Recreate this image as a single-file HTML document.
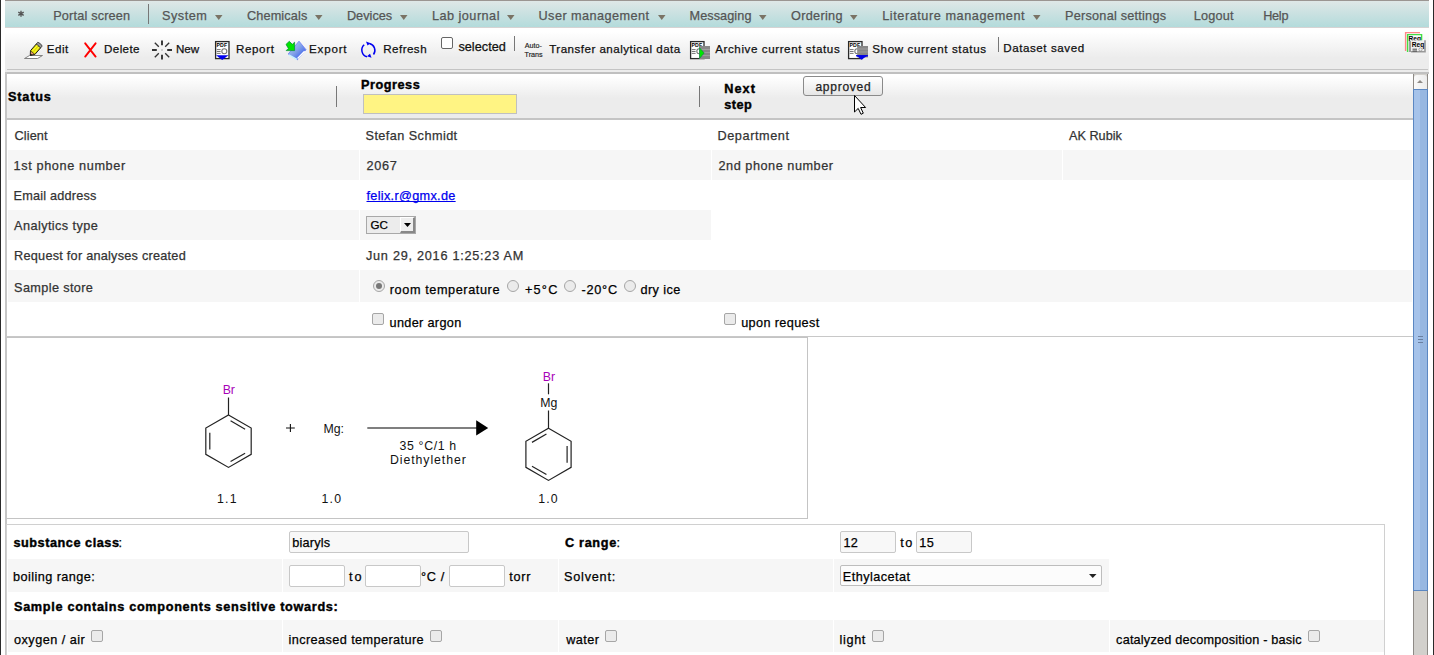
<!DOCTYPE html><html><head><meta charset="utf-8"><style>
html,body{margin:0;padding:0}
body{width:1434px;height:655px;position:relative;overflow:hidden;background:#fff;font-family:"Liberation Sans",sans-serif}
.t{position:absolute;white-space:pre;line-height:20px;-webkit-text-stroke:0.25px currentColor}
.cb{position:absolute;width:10px;height:10px;border:1px solid #a6a6a6;border-radius:2px;background:#ebebeb;box-sizing:content-box}
.rd{position:absolute;width:10px;height:10px;border:1px solid #a6a6a6;border-radius:50%;background:#ebebeb}
.inp{position:absolute;border:1px solid #c8c8c8;border-radius:2px;background:#f8f8f8;box-sizing:border-box}
svg{position:absolute;overflow:visible}
</style></head><body>
<div style="position:absolute;left:0px;top:0px;width:1px;height:655px;background:#2a2a2a"></div>
<div style="position:absolute;left:1433px;top:0px;width:1px;height:655px;background:#2a2a2a"></div>
<div style="position:absolute;left:1px;top:0px;width:1432px;height:655px;background:#fff"></div>
<div style="position:absolute;left:5px;top:0px;width:1424px;height:1px;background:#9b9592"></div>
<div style="position:absolute;left:5px;top:1px;width:1424px;height:26px;background:linear-gradient(#dfe7e7,#b3dbdb)"></div>
<div style="position:absolute;left:5px;top:27px;width:1424px;height:1px;background:#d6d3d3"></div>
<div style="position:absolute;left:148px;top:4px;width:1px;height:20px;background:#777"></div>
<svg style="left:214.9px;top:14.5px" width="8" height="5"><path d="M0 0H7.5L3.75 5Z" fill="#7a7365"/></svg>
<svg style="left:315.0px;top:14.5px" width="8" height="5"><path d="M0 0H7.5L3.75 5Z" fill="#7a7365"/></svg>
<svg style="left:400.0px;top:14.5px" width="8" height="5"><path d="M0 0H7.5L3.75 5Z" fill="#7a7365"/></svg>
<svg style="left:507.0px;top:14.5px" width="8" height="5"><path d="M0 0H7.5L3.75 5Z" fill="#7a7365"/></svg>
<svg style="left:658.0px;top:14.5px" width="8" height="5"><path d="M0 0H7.5L3.75 5Z" fill="#7a7365"/></svg>
<svg style="left:759.0px;top:14.5px" width="8" height="5"><path d="M0 0H7.5L3.75 5Z" fill="#7a7365"/></svg>
<svg style="left:850.0px;top:14.5px" width="8" height="5"><path d="M0 0H7.5L3.75 5Z" fill="#7a7365"/></svg>
<svg style="left:1033.0px;top:14.5px" width="8" height="5"><path d="M0 0H7.5L3.75 5Z" fill="#7a7365"/></svg>
<div style="position:absolute;left:5px;top:28px;width:1424px;height:44px;background:linear-gradient(#fff 8%,#ececec 68%)"></div>
<div style="position:absolute;left:7px;top:69px;width:1421px;height:1px;background:#c4c4c4"></div>
<div style="position:absolute;left:5px;top:72px;width:1424px;height:2px;background:#c0c0c0"></div>
<div style="position:absolute;left:5px;top:72px;width:2px;height:583px;background:#c6c6c6"></div>
<div style="position:absolute;left:7px;top:74px;width:1406px;height:44px;background:linear-gradient(#fff 5%,#ececec 55%)"></div>
<div style="position:absolute;left:6px;top:118px;width:1407px;height:2px;background:#c4c4c4"></div>
<div style="position:absolute;left:336px;top:86px;width:1px;height:21px;background:#777"></div>
<div style="position:absolute;left:699px;top:86px;width:1px;height:21px;background:#777"></div>
<div style="position:absolute;left:363px;top:94px;width:154px;height:20px;background:#fff483;border:1px solid #c0c0c0;box-sizing:border-box"></div>
<div style="position:absolute;left:803px;top:76px;width:80px;height:20px;border:1px solid #8a8a8a;border-radius:3px;background:linear-gradient(#fff,#e6e6e6);box-sizing:border-box"></div>
<div style="position:absolute;left:8px;top:150px;width:351px;height:30px;background:#f6f6f6"></div>
<div style="position:absolute;left:360px;top:150px;width:351px;height:30px;background:#f6f6f6"></div>
<div style="position:absolute;left:712px;top:150px;width:350px;height:30px;background:#f6f6f6"></div>
<div style="position:absolute;left:1063px;top:150px;width:349px;height:30px;background:#f6f6f6"></div>
<div style="position:absolute;left:8px;top:210px;width:351px;height:30px;background:#f6f6f6"></div>
<div style="position:absolute;left:360px;top:210px;width:351px;height:30px;background:#f6f6f6"></div>
<div style="position:absolute;left:8px;top:270px;width:351px;height:32px;background:#f6f6f6"></div>
<div style="position:absolute;left:360px;top:270px;width:1052px;height:32px;background:#f6f6f6"></div>
<div style="position:absolute;left:6px;top:336px;width:1407px;height:1px;background:#c8c8c8"></div>
<div style="position:absolute;left:366px;top:216px;width:50px;height:18px;border:1px solid #a8a8a8;background:#ececec;box-sizing:border-box"></div>
<div style="position:absolute;left:400px;top:217px;width:15px;height:16px;background:#eee;border-top:1px solid #fff;border-left:1px solid #fff;border-right:2px solid #888;border-bottom:2px solid #888;box-sizing:border-box"></div>
<svg style="left:404px;top:222.5px" width="7" height="4"><path d="M0 0H7L3.5 4Z" fill="#000"/></svg>
<div class="rd" style="left:373px;top:280px"></div>
<div class="rd" style="left:507px;top:280px"></div>
<div class="rd" style="left:564px;top:280px"></div>
<div class="rd" style="left:624px;top:280px"></div>
<div style="position:absolute;left:376px;top:283px;width:6px;height:6px;border-radius:50%;background:#777"></div>
<div class="cb" style="left:372px;top:313px"></div>
<div class="cb" style="left:724px;top:313px"></div>
<div class="cb" style="left:441px;top:37px;background:#fff;border-color:#666"></div>
<div style="position:absolute;left:6px;top:337px;width:802px;height:182px;border:1px solid #c4c4c4;border-left:none;box-sizing:border-box"></div>
<div style="position:absolute;left:6px;top:524px;width:1379px;height:131px;border:1px solid #d0d0d0;border-bottom:none;box-sizing:border-box"></div>
<div style="position:absolute;left:8px;top:559px;width:274px;height:33px;background:#f6f6f6"></div>
<div style="position:absolute;left:283px;top:559px;width:275px;height:33px;background:#f6f6f6"></div>
<div style="position:absolute;left:559px;top:559px;width:274px;height:33px;background:#f6f6f6"></div>
<div style="position:absolute;left:834px;top:559px;width:275px;height:33px;background:#f6f6f6"></div>
<div style="position:absolute;left:8px;top:620px;width:274px;height:32px;background:#f6f6f6"></div>
<div style="position:absolute;left:283px;top:620px;width:275px;height:32px;background:#f6f6f6"></div>
<div style="position:absolute;left:559px;top:620px;width:274px;height:32px;background:#f6f6f6"></div>
<div style="position:absolute;left:834px;top:620px;width:275px;height:32px;background:#f6f6f6"></div>
<div style="position:absolute;left:1110px;top:620px;width:274px;height:32px;background:#f6f6f6"></div>
<div class="inp" style="left:289px;top:531px;width:180px;height:22px"></div>
<div class="inp" style="left:840px;top:531px;width:56px;height:22px"></div>
<div class="inp" style="left:916px;top:531px;width:56px;height:22px"></div>
<div class="inp" style="left:289px;top:565px;width:56px;height:22px;background:#fff"></div>
<div class="inp" style="left:365px;top:565px;width:56px;height:22px;background:#fff"></div>
<div class="inp" style="left:449px;top:565px;width:56px;height:22px;background:#fff"></div>
<div class="inp" style="left:840px;top:565px;width:262px;height:21px;background:#fcfcfc;border-color:#bdbdbd"></div>
<svg style="left:1089px;top:574px" width="8" height="4"><path d="M0 0H7.5L3.75 4Z" fill="#222"/></svg>
<div class="cb" style="left:91px;top:630px"></div>
<div class="cb" style="left:430px;top:630px"></div>
<div class="cb" style="left:605px;top:630px"></div>
<div class="cb" style="left:872px;top:630px"></div>
<div class="cb" style="left:1308px;top:630px"></div>
<div style="position:absolute;left:1413px;top:74px;width:15px;height:581px;background:#d2d0cc;border-left:1px solid #8e8a86;border-right:1px solid #8e8a86;box-sizing:border-box"></div>
<div style="position:absolute;left:1414px;top:75px;width:13px;height:14px;background:linear-gradient(90deg,#fafafa,#ececec);border-radius:3px 3px 0 0"></div>
<svg style="left:1417px;top:80px" width="6" height="3"><path d="M0 3L3 0L6 3Z" fill="#8e8a86"/></svg>
<div style="position:absolute;left:1413px;top:89px;width:15px;height:502px;background:linear-gradient(90deg,#a6c3ea 0,#a6c3ea 50%,#97b7e1 50%);border:1px solid #5b87c2;box-sizing:border-box"></div>
<div style="position:absolute;left:1418px;top:336px;width:5px;height:1px;background:#6a7fa0"></div>
<div style="position:absolute;left:1418px;top:339px;width:5px;height:1px;background:#6a7fa0"></div>
<div style="position:absolute;left:1418px;top:342px;width:5px;height:1px;background:#6a7fa0"></div>
<svg style="left:0;top:0;position:absolute;pointer-events:none" width="1434" height="655" viewBox="0 0 1434 655"><path d="M21 10.8V16.8M18.3 12.2L23.7 15.4M23.7 12.2L18.3 15.4" stroke="#555" stroke-width="1.35"/><path d="M24.5 58.5L29.5 55.5H42.5L37.5 58.5Z" fill="#fff" stroke="#777" stroke-width="0.9"/><g transform="translate(30.3 55.3) rotate(-49)"><path d="M0 0L3.6 -2.9H12.5V2.9H3.6Z" fill="#e4e000" stroke="#111" stroke-width="0.9"/><path d="M0.3 0L3.6 -2.6V2.6Z" fill="#f0a070" stroke="#222" stroke-width="0.6"/><path d="M0 0L1.5 -1.1V1.1Z" fill="#111"/><path d="M12.5 -2.9H14.8Q16 0 14.8 2.9H12.5Z" fill="#999" stroke="#333" stroke-width="0.8"/><path d="M4.5 -1.2H12.2M4.5 1.2H12.2" stroke="#ffff50" stroke-width="0.8"/></g><path d="M85.2 43.3L95.6 56.6M95.6 43.3L85.2 56.6" stroke="#f00" stroke-width="1.9" stroke-linecap="round"/><g stroke="#333" stroke-width="1.9" stroke-linecap="butt"><path d="M162 40.5V45.3M162 54.7V59.5M152 50H156.8M167.2 50H172"/><path d="M154.8 42.8L158.8 46.8M169.2 42.8L165.2 46.8M154.8 57.2L158.8 53.2M169.2 57.2L165.2 53.2" stroke-width="1.35"/></g><rect x="161.3" y="49.3" width="1.4" height="1.4" fill="#aaa"/><rect x="215.6" y="41.6" width="13.4" height="17" fill="#fff" stroke="#2a2a2a" stroke-width="1.3"/><text x="216.4" y="47.0" font-family="Liberation Sans" font-weight="bold" font-size="5.2" letter-spacing="0.2" fill="#000">PDF</text><path d="M216.8 49.6H220.6M216.8 51.5H220.6M216.8 53.4H220.6" stroke="#666" stroke-width="0.9"/><circle cx="224.3" cy="51.2" r="2.5" fill="none" stroke="#777" stroke-width="1.1"/><path d="M216 55.3H228.5L222.2 60Z" fill="#0000f0"/><defs><linearGradient id="gb" x1="0" y1="0" x2="1" y2="1"><stop offset="0" stop-color="#c8dcf4"/><stop offset="0.5" stop-color="#7f9fe8"/><stop offset="1" stop-color="#1a40f0"/></linearGradient></defs><path d="M299 41.2L306 49.7L297.4 59.8L288.2 54Z" fill="url(#gb)" stroke="#6a7af8" stroke-width="0.8"/><path d="M304.6 51.2L297.6 58.6" stroke="#fff" stroke-width="1.4"/><path d="M288.8 54.8L297 59.3" stroke="#c8f4ff" stroke-width="1.4"/><path d="M286 44.4L289.3 41.3L292.3 44.3L294.6 42.2V50.6H286.2L288.4 48.4Z" fill="#00e400" stroke="#083" stroke-width="0.7" stroke-linejoin="miter"/><g fill="none" stroke="#0000f0" stroke-width="1.5"><path d="M364.2 44.8A7 7 0 0 0 367 56.8"/><path d="M373.5 54.5A7 7 0 0 0 369.5 43.5"/></g><path d="M366 41.5L370.5 43.2L367.5 45.6Z" fill="#0000f0"/><path d="M371.5 57.8L367 56.2L370 53.8Z" fill="#0000f0"/><rect x="690.6" y="41.6" width="13.4" height="17" fill="#fff" stroke="#2a2a2a" stroke-width="1.3"/><text x="691.4" y="47.0" font-family="Liberation Sans" font-weight="bold" font-size="5.2" letter-spacing="0.2" fill="#000">PDF</text><path d="M691.8 49.6H695.6M691.8 51.5H695.6M691.8 53.4H695.6" stroke="#666" stroke-width="0.9"/><circle cx="699.3" cy="51.2" r="2.5" fill="none" stroke="#777" stroke-width="1.1"/><rect x="699.2" y="46" width="10.8" height="13" fill="#878787"/><path d="M699.2 49.5H710M699.2 52.5H710M699.2 55.5H710" stroke="#a8a8a8" stroke-width="0.7"/><path d="M699.5 47.6L704.2 53L699.5 58.6Z" fill="#00e600" stroke="#074" stroke-width="0.5"/><rect x="848.6" y="41.6" width="13.4" height="17" fill="#fff" stroke="#2a2a2a" stroke-width="1.3"/><text x="849.4" y="47.0" font-family="Liberation Sans" font-weight="bold" font-size="5.2" letter-spacing="0.2" fill="#000">PDF</text><path d="M849.8 49.6H853.6M849.8 51.5H853.6M849.8 53.4H853.6" stroke="#666" stroke-width="0.9"/><circle cx="857.3" cy="51.2" r="2.5" fill="none" stroke="#777" stroke-width="1.1"/><rect x="857.2" y="46" width="10.8" height="11.4" fill="#878787"/><path d="M857.2 49H868M857.2 52H868" stroke="#a8a8a8" stroke-width="0.7"/><path d="M856 55.2H868L861.5 59.8Z" fill="#0000e8"/><rect x="856" y="55.2" width="12" height="1.2" fill="#0000e8"/><path d="M1405.6 51V32.6H1420" fill="none" stroke="#ff8888" stroke-width="1.4"/><path d="M1407.6 52V34.6H1421.6V41" fill="none" stroke="#44dd44" stroke-width="1.4"/><text x="1408.6" y="40.6" font-family="Liberation Sans" font-weight="bold" font-size="6.6" fill="#000">Req</text><rect x="1411" y="40.3" width="14" height="11.5" fill="#f0f0f0"/><path d="M1425 40.3V51.8H1411" fill="none" stroke="#999" stroke-width="1.6"/><text x="1411.8" y="46.6" font-family="Liberation Sans" font-weight="bold" font-size="6.6" fill="#000">Req</text><path d="M1412.5 49.2H1417M1412.5 51H1417" stroke="#222" stroke-width="0.8"/><path d="M1410 41V52" stroke="#444" stroke-width="1"/><circle cx="1420.5" cy="49.5" r="1.6" fill="none" stroke="#888" stroke-width="0.7"/><rect x="514" y="36" width="1" height="15" fill="#777"/><rect x="998" y="37" width="1" height="15" fill="#777"/><text x="524.8" y="48.1" font-family="Liberation Sans" font-size="7.2" fill="#1a1a1a" stroke="#1a1a1a" stroke-width="0.15">Auto-</text><text x="524.6" y="56.9" font-family="Liberation Sans" font-size="7.2" fill="#1a1a1a" stroke="#1a1a1a" stroke-width="0.15">Trans</text><path d="M854.5 95.5V112L858.2 108.4L861 114.3L863.3 113.2L860.6 107.5H865.6Z" fill="#fff" stroke="#000" stroke-width="1" stroke-linejoin="round"/><polygon points="228.50,415.00 251.19,428.10 251.19,454.30 228.50,467.40 205.81,454.30 205.81,428.10" fill="none" stroke="#222" stroke-width="1.2" stroke-linejoin="miter"/><line x1="230.58" y1="420.82" x2="245.11" y2="429.21" stroke="#222" stroke-width="1.2"/><line x1="245.11" y1="453.19" x2="230.58" y2="461.58" stroke="#222" stroke-width="1.2"/><line x1="209.81" y1="449.58" x2="209.81" y2="432.82" stroke="#222" stroke-width="1.2"/><line x1="228.5" y1="397.5" x2="228.5" y2="415" stroke="#222" stroke-width="1.2"/><text x="228.8" y="394" text-anchor="middle" font-family="Liberation Sans" font-size="12.3" fill="#a800b8">Br</text><path d="M286 428H294.8M290.4 424V432" stroke="#111" stroke-width="1.1"/><text x="323.5" y="433" font-family="Liberation Sans" font-size="12.3" fill="#111">Mg:</text><line x1="367.3" y1="428" x2="477" y2="428" stroke="#555" stroke-width="1.4"/><path d="M476.2 420.3L488.2 428L476.2 435.6Z" fill="#000"/><text x="428.2" y="450" text-anchor="middle" font-family="Liberation Sans" font-size="12.3" letter-spacing="0.66" fill="#111">35 °C/1 h</text><text x="428.4" y="464" text-anchor="middle" font-family="Liberation Sans" font-size="12.3" letter-spacing="0.93" fill="#111">Diethylether</text><polygon points="548.50,428.20 571.10,441.25 571.10,467.35 548.50,480.40 525.90,467.35 525.90,441.25" fill="none" stroke="#222" stroke-width="1.2" stroke-linejoin="miter"/><line x1="531.97" y1="442.37" x2="546.43" y2="434.01" stroke="#222" stroke-width="1.2"/><line x1="567.10" y1="445.95" x2="567.10" y2="462.65" stroke="#222" stroke-width="1.2"/><line x1="546.43" y1="474.59" x2="531.97" y2="466.23" stroke="#222" stroke-width="1.2"/><line x1="548.5" y1="410.5" x2="548.5" y2="428.2" stroke="#222" stroke-width="1.2"/><line x1="548.5" y1="383.3" x2="548.5" y2="394.3" stroke="#222" stroke-width="1.2"/><text x="548.9" y="407.2" text-anchor="middle" font-family="Liberation Sans" font-size="12.3" fill="#111">Mg</text><text x="548.9" y="380.7" text-anchor="middle" font-family="Liberation Sans" font-size="12.3" fill="#a800b8">Br</text><text x="227.4" y="503.2" text-anchor="middle" font-family="Liberation Sans" font-size="12.3" letter-spacing="1.2" fill="#111">1.1</text><text x="331.9" y="503.2" text-anchor="middle" font-family="Liberation Sans" font-size="12.3" letter-spacing="1.2" fill="#111">1.0</text><text x="548.5" y="503.2" text-anchor="middle" font-family="Liberation Sans" font-size="12.3" letter-spacing="1.2" fill="#111">1.0</text></svg>
<span class="t" style="left:53.20px;top:6px;font-size:12.7px;font-weight:normal;letter-spacing:0.183px;color:#555;">Portal screen</span>
<span class="t" style="left:162.10px;top:6px;font-size:12.7px;font-weight:normal;letter-spacing:0.480px;color:#555;">System</span>
<span class="t" style="left:247.00px;top:6px;font-size:12.7px;font-weight:normal;letter-spacing:0.125px;color:#555;">Chemicals</span>
<span class="t" style="left:346.90px;top:6px;font-size:12.7px;font-weight:normal;letter-spacing:0.033px;color:#555;">Devices</span>
<span class="t" style="left:431.90px;top:6px;font-size:12.7px;font-weight:normal;letter-spacing:0.480px;color:#555;">Lab journal</span>
<span class="t" style="left:538.50px;top:6px;font-size:12.7px;font-weight:normal;letter-spacing:0.443px;color:#555;">User management</span>
<span class="t" style="left:689.50px;top:6px;font-size:12.7px;font-weight:normal;letter-spacing:0.075px;color:#555;">Messaging</span>
<span class="t" style="left:791.10px;top:6px;font-size:12.7px;font-weight:normal;letter-spacing:0.286px;color:#555;">Ordering</span>
<span class="t" style="left:882.20px;top:6px;font-size:12.7px;font-weight:normal;letter-spacing:0.560px;color:#555;">Literature management</span>
<span class="t" style="left:1065.10px;top:6px;font-size:12.7px;font-weight:normal;letter-spacing:0.225px;color:#555;">Personal settings</span>
<span class="t" style="left:1193.80px;top:6px;font-size:12.7px;font-weight:normal;letter-spacing:0.200px;color:#555;">Logout</span>
<span class="t" style="left:1263.20px;top:6px;font-size:12.7px;font-weight:normal;letter-spacing:-0.267px;color:#555;">Help</span>
<span class="t" style="left:46.80px;top:39px;font-size:11.6px;font-weight:normal;letter-spacing:0.467px;color:#111;">Edit</span>
<span class="t" style="left:104.10px;top:39px;font-size:11.6px;font-weight:normal;letter-spacing:0.360px;color:#111;">Delete</span>
<span class="t" style="left:176.10px;top:39px;font-size:11.6px;font-weight:normal;letter-spacing:-0.100px;color:#111;">New</span>
<span class="t" style="left:235.90px;top:39px;font-size:11.6px;font-weight:normal;letter-spacing:0.640px;color:#111;">Report</span>
<span class="t" style="left:309.00px;top:39px;font-size:11.6px;font-weight:normal;letter-spacing:0.800px;color:#111;">Export</span>
<span class="t" style="left:383.20px;top:39px;font-size:11.6px;font-weight:normal;letter-spacing:0.467px;color:#111;">Refresh</span>
<span class="t" style="left:458.40px;top:37px;font-size:12.7px;font-weight:normal;letter-spacing:0.029px;color:#111;">selected</span>
<span class="t" style="left:549.20px;top:39px;font-size:11.6px;font-weight:normal;letter-spacing:0.478px;color:#111;">Transfer analytical data</span>
<span class="t" style="left:715.20px;top:39px;font-size:11.6px;font-weight:normal;letter-spacing:0.590px;color:#111;">Archive current status</span>
<span class="t" style="left:872.20px;top:39px;font-size:11.6px;font-weight:normal;letter-spacing:0.633px;color:#111;">Show current status</span>
<span class="t" style="left:1003.20px;top:38px;font-size:11.6px;font-weight:normal;letter-spacing:0.567px;color:#111;">Dataset saved</span>
<span class="t" style="left:8.00px;top:87px;font-size:12.7px;font-weight:bold;letter-spacing:0.800px;color:#000;-webkit-text-stroke:0.4px currentColor;">Status</span>
<span class="t" style="left:360.90px;top:75px;font-size:12.7px;font-weight:bold;letter-spacing:0.543px;color:#000;-webkit-text-stroke:0.4px currentColor;">Progress</span>
<span class="t" style="left:724.20px;top:79px;font-size:12.7px;font-weight:bold;letter-spacing:1.067px;color:#000;-webkit-text-stroke:0.4px currentColor;">Next</span>
<span class="t" style="left:724.20px;top:95px;font-size:12.7px;font-weight:bold;letter-spacing:0.467px;color:#000;-webkit-text-stroke:0.4px currentColor;">step</span>
<span class="t" style="left:815.40px;top:77px;font-size:12px;font-weight:normal;letter-spacing:0.743px;color:#222;">approved</span>
<span class="t" style="left:14.50px;top:126px;font-size:12.7px;font-weight:normal;letter-spacing:0.120px;color:#333;">Client</span>
<span class="t" style="left:13.50px;top:156px;font-size:12.7px;font-weight:normal;letter-spacing:0.627px;color:#333;">1st phone number</span>
<span class="t" style="left:13.50px;top:186px;font-size:12.7px;font-weight:normal;letter-spacing:0.200px;color:#333;">Email address</span>
<span class="t" style="left:14.10px;top:216px;font-size:12.7px;font-weight:normal;letter-spacing:0.415px;color:#333;">Analytics type</span>
<span class="t" style="left:14.10px;top:246px;font-size:12.7px;font-weight:normal;letter-spacing:0.244px;color:#333;">Request for analyses created</span>
<span class="t" style="left:14.10px;top:278px;font-size:12.7px;font-weight:normal;letter-spacing:0.364px;color:#333;">Sample store</span>
<span class="t" style="left:365.50px;top:126px;font-size:12.7px;font-weight:normal;letter-spacing:0.431px;color:#333;">Stefan Schmidt</span>
<span class="t" style="left:366.50px;top:156px;font-size:12.7px;font-weight:normal;letter-spacing:0.667px;color:#333;">2067</span>
<span class="t" style="left:366.50px;top:186px;font-size:12.7px;font-weight:normal;letter-spacing:0.308px;color:#0000ee;text-decoration:underline;text-decoration-skip-ink:none;">felix.r@gmx.de</span>
<span class="t" style="left:370.40px;top:215px;font-size:11.6px;font-weight:normal;letter-spacing:0.200px;color:#000;">GC</span>
<span class="t" style="left:366.00px;top:246px;font-size:12.7px;font-weight:normal;letter-spacing:0.736px;color:#333;">Jun 29, 2016 1:25:23 AM</span>
<span class="t" style="left:389.80px;top:280px;font-size:12.7px;font-weight:normal;letter-spacing:0.587px;color:#000;">room temperature</span>
<span class="t" style="left:525.00px;top:280px;font-size:12.7px;font-weight:normal;letter-spacing:1.200px;color:#000;">+5°C</span>
<span class="t" style="left:581.50px;top:280px;font-size:12.7px;font-weight:normal;letter-spacing:0.750px;color:#000;">-20°C</span>
<span class="t" style="left:640.40px;top:280px;font-size:12.7px;font-weight:normal;letter-spacing:0.433px;color:#000;">dry ice</span>
<span class="t" style="left:389.60px;top:313px;font-size:12.7px;font-weight:normal;letter-spacing:0.320px;color:#000;">under argon</span>
<span class="t" style="left:741.20px;top:313px;font-size:12.7px;font-weight:normal;letter-spacing:0.364px;color:#000;">upon request</span>
<span class="t" style="left:717.50px;top:126px;font-size:12.7px;font-weight:normal;letter-spacing:0.578px;color:#333;">Department</span>
<span class="t" style="left:718.50px;top:156px;font-size:12.7px;font-weight:normal;letter-spacing:0.533px;color:#333;">2nd phone number</span>
<span class="t" style="left:1069.00px;top:126px;font-size:12.7px;font-weight:normal;letter-spacing:0.000px;color:#333;">AK Rubik</span>
<span class="t" style="left:13.40px;top:533px;font-size:12.7px;font-weight:bold;letter-spacing:0.543px;color:#000;-webkit-text-stroke:0.4px currentColor;">substance class</span>
<span class="t" style="left:118.50px;top:533px;font-size:12.7px;font-weight:normal;letter-spacing:0.000px;color:#000;">:</span>
<span class="t" style="left:292.20px;top:533px;font-size:12.7px;font-weight:normal;letter-spacing:0.200px;color:#000;">biaryls</span>
<span class="t" style="left:565.00px;top:533px;font-size:12.7px;font-weight:bold;letter-spacing:0.667px;color:#000;-webkit-text-stroke:0.4px currentColor;">C range</span>
<span class="t" style="left:616.40px;top:533px;font-size:12.7px;font-weight:normal;letter-spacing:0.000px;color:#000;">:</span>
<span class="t" style="left:843.60px;top:533px;font-size:12.7px;font-weight:normal;letter-spacing:0.200px;color:#000;">12</span>
<span class="t" style="left:900.30px;top:533px;font-size:12.7px;font-weight:normal;letter-spacing:1.400px;color:#000;">to</span>
<span class="t" style="left:919.20px;top:533px;font-size:12.7px;font-weight:normal;letter-spacing:0.400px;color:#000;">15</span>
<span class="t" style="left:13.00px;top:567px;font-size:12.7px;font-weight:normal;letter-spacing:0.431px;color:#000;">boiling range:</span>
<span class="t" style="left:349.00px;top:567px;font-size:12.7px;font-weight:normal;letter-spacing:2.000px;color:#000;">to</span>
<span class="t" style="left:420.90px;top:567px;font-size:12.7px;font-weight:normal;letter-spacing:0.667px;color:#000;">°C /</span>
<span class="t" style="left:509.30px;top:567px;font-size:12.7px;font-weight:normal;letter-spacing:0.733px;color:#000;">torr</span>
<span class="t" style="left:564.00px;top:567px;font-size:12.7px;font-weight:normal;letter-spacing:0.771px;color:#000;">Solvent:</span>
<span class="t" style="left:842.80px;top:567px;font-size:12.7px;font-weight:normal;letter-spacing:0.440px;color:#000;">Ethylacetat</span>
<span class="t" style="left:14.00px;top:597px;font-size:12.7px;font-weight:bold;letter-spacing:0.677px;color:#000;-webkit-text-stroke:0.4px currentColor;">Sample contains components sensitive towards:</span>
<span class="t" style="left:14.00px;top:630px;font-size:12.7px;font-weight:normal;letter-spacing:0.473px;color:#000;">oxygen / air</span>
<span class="t" style="left:288.50px;top:630px;font-size:12.7px;font-weight:normal;letter-spacing:0.410px;color:#000;">increased temperature</span>
<span class="t" style="left:566.30px;top:630px;font-size:12.7px;font-weight:normal;letter-spacing:0.400px;color:#000;">water</span>
<span class="t" style="left:839.50px;top:630px;font-size:12.7px;font-weight:normal;letter-spacing:0.650px;color:#000;">light</span>
<span class="t" style="left:1116.10px;top:630px;font-size:12.7px;font-weight:normal;letter-spacing:0.193px;color:#000;">catalyzed decomposition - basic</span>
</body></html>
